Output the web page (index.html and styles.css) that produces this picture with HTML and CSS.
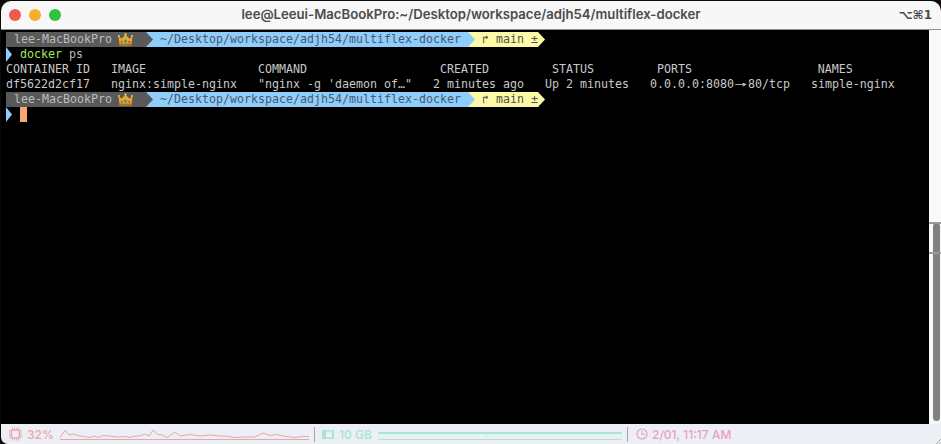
FILE: index.html
```html
<!DOCTYPE html>
<html lang="en">
<head>
<meta charset="utf-8">
<title>Terminal</title>
<link rel="stylesheet" href="styles.css">
</head>
<body>
<div class="window">
  <header class="titlebar">
    <div class="lights">
      <span class="light red"></span>
      <span class="light amber"></span>
      <span class="light green"></span>
    </div>
    <div class="title">lee@Leeui-MacBookPro:~/Desktop/workspace/adjh54/multiflex-docker</div>
    <div class="shortcut">⌥⌘1</div>
  </header>
  <main class="body">
    <section class="terminal">
      <div class="line prompt-bar">
        <span class="seg seg-host">lee-MacBookPro<svg class="crown" viewBox="0 0 15 13"><path d="M.5 3.500l3.200 2L7.500 1.500l3.800 4 3.200-2-1.200 9H1.700z" fill="#e6aa2e"/><path d="M1.600 10.500h11.800l-.3 2H1.900z" fill="#a9701f"/><circle cx=".9" cy="3" r="1" fill="#f6d262"/><circle cx="7.500" cy="1.300" r="1.100" fill="#f6d262"/><circle cx="14.100" cy="3" r="1" fill="#f6d262"/><circle cx="7.500" cy="8" r="1.600" fill="#23a08f"/><circle cx="3.700" cy="8.700" r="1" fill="#c4412f"/><circle cx="11.300" cy="8.700" r="1" fill="#c4412f"/></svg></span>
        <span class="tip tip-host"></span>
        <span class="seg seg-path">~/Desktop/workspace/adjh54/multiflex-docker</span>
        <span class="tip tip-path"></span>
        <span class="seg seg-git">↱ main ±</span>
        <span class="tip tip-git"></span>
      </div>
      <div class="line line-cmd"><span class="caret"></span><span class="cmd">docker</span><span class="arg"> ps</span></div>
      <div class="line line-text">CONTAINER ID   IMAGE                COMMAND                   CREATED         STATUS         PORTS                  NAMES</div>
      <div class="line line-text">df5622d2cf17   nginx:simple-nginx   "nginx -g 'daemon of…"   2 minutes ago   Up 2 minutes   0.0.0.0:8080<span class="arrow">→</span>80/tcp   simple-nginx</div>
      <div class="line prompt-bar">
        <span class="seg seg-host">lee-MacBookPro<svg class="crown" viewBox="0 0 15 13"><path d="M.5 3.500l3.200 2L7.500 1.500l3.800 4 3.200-2-1.200 9H1.700z" fill="#e6aa2e"/><path d="M1.600 10.500h11.800l-.3 2H1.900z" fill="#a9701f"/><circle cx=".9" cy="3" r="1" fill="#f6d262"/><circle cx="7.500" cy="1.300" r="1.100" fill="#f6d262"/><circle cx="14.100" cy="3" r="1" fill="#f6d262"/><circle cx="7.500" cy="8" r="1.600" fill="#23a08f"/><circle cx="3.700" cy="8.700" r="1" fill="#c4412f"/><circle cx="11.300" cy="8.700" r="1" fill="#c4412f"/></svg></span>
        <span class="tip tip-host"></span>
        <span class="seg seg-path">~/Desktop/workspace/adjh54/multiflex-docker</span>
        <span class="tip tip-path"></span>
        <span class="seg seg-git">↱ main ±</span>
        <span class="tip tip-git"></span>
      </div>
      <div class="line line-cmd"><span class="caret"></span><span class="cursor"></span></div>
    </section>
    <aside class="scrollbar">
      <span class="rule rule-top"></span>
      <span class="rule rule-low"></span>
      <div class="thumb"></div>
    </aside>
  </main>
  <footer class="status">
    <div class="widget cpu">
      <svg class="icon icon-cpu" viewBox="0 0 13 14"><rect x="2.500" y="3" width="8" height="8" fill="none" stroke="currentColor" stroke-width="1.400"/><path d="M0 4h2M0 6h2M0 8h2M0 10h2M11 4h2M11 6h2M11 8h2M11 10h2M3.500 .5v2M5.500 .5v2M7.500 .5v2M9.500 .5v2M3.500 11.500v2M5.500 11.500v2M7.500 11.500v2M9.500 11.500v2" stroke="currentColor" stroke-width=".9" fill="none"/></svg>
      <span class="value">32%</span>
      <svg class="graph graph-cpu" viewBox="60 426 250 16"><polyline points="60,438 65,430 69,435 73,434 80,436 90,437.500 94,436 98,437.500 103,435.500 110,436 117,437 125,436.500 130,437.500 135,436 140,436 145,434 149,436 153,430 158,434.500 163,435 167,437.500 175,432 180,436 190,434.500 200,436 210,435 220,436 225,436 235,437.500 245,437 255,437 263,433 270,435.500 276,434.500 283,436 295,437.500 302,436.500 309,436.500"/><line x1="60" y1="439.500" x2="309" y2="439.500"/></svg>
    </div>
    <div class="widget mem">
      <svg class="icon icon-mem" viewBox="0 0 12 9"><path d="M0 0h12v9H0z" fill="currentColor"/><path d="M4 1.500h6v6H4z" fill="#eceff4"/></svg>
      <span class="value">10 GB</span>
      <svg class="graph graph-mem" viewBox="378 426 245 16"><line class="mem-used" x1="378" y1="433" x2="622" y2="433"/><line x1="378" y1="439.500" x2="622" y2="439.500"/><line class="tick" x1="486.500" y1="434" x2="486.500" y2="437"/></svg>
    </div>
    <div class="widget clock">
      <svg class="icon icon-clock" viewBox="0 0 12 12"><circle cx="6" cy="6" r="5" fill="none" stroke="currentColor" stroke-width="1.200"/><path d="M6 3v3.300h3" fill="none" stroke="currentColor" stroke-width="1.100"/></svg>
      <span class="value value-clock">2/01, 11:17 AM</span>
    </div>
    <svg class="grip" viewBox="0 0 6 6"><path d="M6 1L1 6M6 4L4 6" stroke="#9a9a9a" stroke-width=".8"/></svg>
  </footer>
</div>
</body>
</html>
```
FILE: styles.css
```css
* { box-sizing: border-box; }
html, body { margin: 0; height: 100%; background: #0b0b0b; overflow: hidden; }
.window {
  height: 444px;
  margin-left: 1px;
  padding-top: 1px;
  display: flex;
  flex-direction: column;
}
.titlebar {
  position: relative;
  height: 29px;
  flex: none;
  display: flex;
  align-items: center;
  background: #f7f7f7;
  border-radius: 10px 10px 0 0;
  border-bottom: 1px solid #8f8f8f;
  font-family: Inter, "Liberation Sans", sans-serif;
}
.lights { display: flex; gap: 8px; padding-left: 8px; }
.light { width: 12px; height: 12px; border-radius: 50%; }
.red { background: #f05a50; }
.amber { background: #f6ae2d; }
.green { background: #2fc23f; }
.title {
  position: absolute;
  left: 0;
  right: 0;
  top: 5px;
  text-align: center;
  font-size: 13.160px;
  line-height: 16px;
  font-weight: 600;
  color: #4b4b4b;
  white-space: nowrap;
}
.shortcut {
  margin-left: auto;
  padding-right: 9px;
  font-size: 12px;
  font-weight: 600;
  color: #4b4b4b;
  font-family: "DejaVu Sans", sans-serif;
}
.body { flex: 1; display: flex; min-height: 0; }
.terminal {
  flex: 1;
  background: #000;
  padding: 2px 0 0 5px;
  font-family: "DejaVu Sans Mono", monospace;
  font-size: 11.630px;
  color: #c9c9c9;
}
.line { height: 15px; line-height: 15px; white-space: pre; }
.prompt-bar, .line-cmd { display: flex; }
.prompt-bar { align-items: stretch; }
.seg { display: block; white-space: pre; }
.seg-host { background: #595959; color: #bcbcbc; width: 140px; padding-left: 8px; display: flex; align-items: center; }
.crown { width: 15px; height: 13px; margin-left: 6px; flex: none; }
.seg-path { background: #8fcdfc; color: #46596d; width: 315px; padding-left: 7px; }
.seg-git { background: #fcfaa6; color: #4f4f4f; width: 63px; padding-left: 7px; }
.tip { width: 7px; flex: none; }
.tip::before { content: ""; display: block; height: 100%; clip-path: polygon(0 0, 100% 50%, 0 100%); }
.tip-host { background: #8fcdfc; }
.tip-host::before { background: #595959; }
.tip-path { background: #fcfaa6; }
.tip-path::before { background: #8fcdfc; }
.tip-git::before { background: #fcfaa6; }
.caret { width: 6px; height: 15px; margin-right: 8px; flex: none; background: #8fcdfc; clip-path: polygon(0 0, 100% 50%, 0 100%); }
.cmd { color: #a5e75a; }
.arg { color: #b8b8b8; }
.arrow { display: inline-block; width: 14px; text-align: center; transform: scaleX(1.700); }
.cursor { width: 7px; height: 15px; background: #fba66f; }
.scrollbar {
  position: relative;
  width: 12px;
  flex: none;
  background: #f9f9f9;
  padding: 193px 1px 3px 4px;
  display: flex;
}
.thumb { flex: 1; background: #808080; border-radius: 4px; }
.rule { position: absolute; left: 0; right: 0; height: 2px; background: #9a9a9a; }
.rule-top { top: 192px; }
.rule-low { top: 222px; }
.status {
  position: relative;
  height: 20px;
  flex: none;
  display: flex;
  align-items: center;
  background: #eceff4;
  border-radius: 0 0 0 7px;
  font-family: Inter, "Liberation Sans", sans-serif;
  font-size: 12px;
  font-weight: 500;
}
.widget { display: flex; align-items: center; height: 15px; border-right: 1px solid #a6a6a6; }
.cpu { color: #eca6a9; width: 314px; padding-left: 8px; }
.mem { color: #a6e6d4; width: 313px; padding-left: 7px; }
.clock { color: #eb9fc3; border-right: 0; padding-left: 8px; }
.icon { flex: none; display: block; }
.icon-cpu { width: 13px; height: 14px; }
.icon-mem { width: 12px; height: 9px; }
.icon-clock { width: 12px; height: 12px; }
.value { margin-left: 5px; white-space: nowrap; }
.value-clock { margin-left: 4px; }
.graph { display: block; height: 16px; fill: none; stroke: currentColor; stroke-width: 1; }
.graph-cpu { width: 250px; margin-left: 6px; }
.graph-mem { width: 245px; margin-left: 6px; }
.mem-used { stroke-width: 2; }
.tick { opacity: .6; }
.grip { position: absolute; right: 0; bottom: 0; width: 6px; height: 6px; }
```
